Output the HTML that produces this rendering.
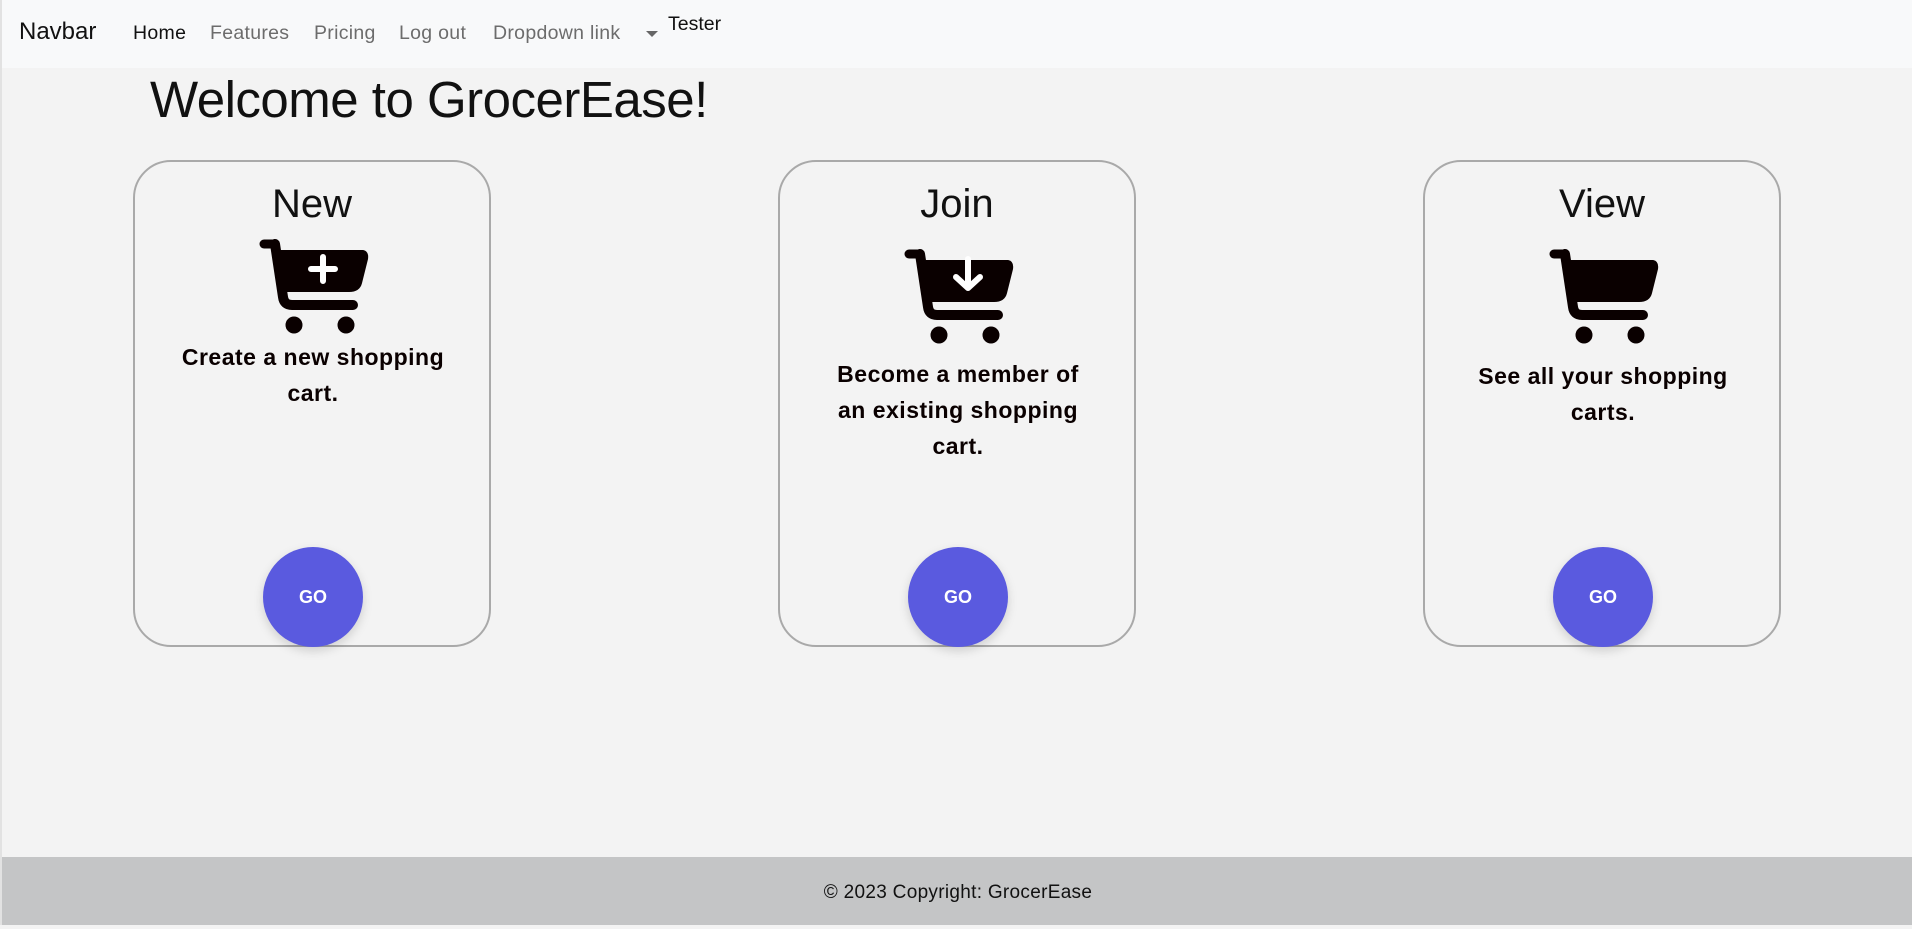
<!DOCTYPE html>
<html><head><meta charset="utf-8">
<style>
*{margin:0;padding:0;box-sizing:border-box}
body{width:1912px;height:925px;background:#f3f3f3;font-family:"Liberation Sans",sans-serif;position:relative;overflow:hidden;border-left:2px solid #e2e2e2}
.nav{position:absolute;left:0;top:0;width:1912px;height:68px;background:#f8f9fa}
.brand{position:absolute;left:17px;top:18px;font-size:24px;color:#111}
.link{position:absolute;top:22px;font-size:19.5px;color:#6c6c6c;letter-spacing:0.3px}
h1{position:absolute;left:148px;top:70px;font-size:51px;font-weight:normal;color:#111;letter-spacing:-0.5px}
.card{position:absolute;top:160px;width:358px;height:487px;border:2px solid #a9a9a9;border-radius:38px}
.card h2{position:absolute;left:0;width:100%;top:20px;text-align:center;font-size:40px;font-weight:normal;color:#111}
.card svg{position:absolute;left:124px}
.card p{position:absolute;left:40px;width:276px;text-align:center;font-weight:bold;font-size:23px;line-height:36px;color:#0a0000;letter-spacing:0.5px}
.go{position:absolute;left:128px;top:385px;width:100px;height:100px;border-radius:50%;background:#5a5adf;color:#fff;font-weight:bold;font-size:18px;text-align:center;line-height:100px;box-shadow:0 4px 10px rgba(0,0,0,.15)}
.foot{position:absolute;left:0;top:857px;width:1912px;height:68px;background:#c4c5c6;text-align:center;line-height:72px;font-size:19px;color:#111;letter-spacing:0.3px}
</style></head><body>
<div class="nav">
<span class="brand">Navbar</span>
<span class="link" style="left:131px;color:#111">Home</span>
<span class="link" style="left:208px">Features</span>
<span class="link" style="left:312px">Pricing</span>
<span class="link" style="left:397px">Log out</span>
<span class="link" style="left:491px">Dropdown link</span>
<span style="position:absolute;left:644px;top:31px;border-left:6px solid transparent;border-right:6px solid transparent;border-top:6px solid #666"></span>
<span style="position:absolute;left:666px;top:13px;font-size:19.5px;color:#111">Tester</span>
</div>
<h1>Welcome to GrocerEase!</h1>

<div class="card" style="left:131px">
<h2>New</h2>
<svg style="top:77px" width="110" height="96" viewBox="0 0 110 96">
<g fill="#0a0000" stroke="#0a0000" stroke-linecap="round" stroke-linejoin="round">
<line x1="5" y1="5" x2="16" y2="5" stroke-width="9"/>
<path d="M16 5 L24 58 Q25 66 33 66 L94 66" fill="none" stroke-width="10"/>
<path d="M18 12 L104 12 Q109 13 108 20 L102 44 Q100 52 90 52 L26 52 Z" stroke-width="2"/>
<circle cx="35" cy="86" r="8"/><circle cx="87" cy="86" r="8"/>
</g>
<path d="M64 18 V42 M52 30 H76" stroke="#fff" stroke-width="6" stroke-linecap="round"/>
</svg>
<p style="top:177px">Create a new shopping cart.</p>
<div class="go">GO</div>
</div>

<div class="card" style="left:776px">
<h2>Join</h2>
<svg style="top:87px" width="110" height="96" viewBox="0 0 110 96">
<g fill="#0a0000" stroke="#0a0000" stroke-linecap="round" stroke-linejoin="round">
<line x1="5" y1="5" x2="16" y2="5" stroke-width="9"/>
<path d="M16 5 L24 58 Q25 66 33 66 L94 66" fill="none" stroke-width="10"/>
<path d="M18 12 L104 12 Q109 13 108 20 L102 44 Q100 52 90 52 L26 52 Z" stroke-width="2"/>
<circle cx="35" cy="86" r="8"/><circle cx="87" cy="86" r="8"/>
</g>
<path d="M64 10 V38 M52 28 L64 39 L76 28" fill="none" stroke="#fff" stroke-width="6" stroke-linecap="round" stroke-linejoin="round"/>
</svg>
<p style="top:194px">Become a member of<br>an existing shopping<br>cart.</p>
<div class="go">GO</div>
</div>

<div class="card" style="left:1421px">
<h2>View</h2>
<svg style="top:87px" width="110" height="96" viewBox="0 0 110 96">
<g fill="#0a0000" stroke="#0a0000" stroke-linecap="round" stroke-linejoin="round">
<line x1="5" y1="5" x2="16" y2="5" stroke-width="9"/>
<path d="M16 5 L24 58 Q25 66 33 66 L94 66" fill="none" stroke-width="10"/>
<path d="M18 12 L104 12 Q109 13 108 20 L102 44 Q100 52 90 52 L26 52 Z" stroke-width="2"/>
<circle cx="35" cy="86" r="8"/><circle cx="87" cy="86" r="8"/>
</g>
</svg>
<p style="top:196px">See all your shopping<br>carts.</p>
<div class="go">GO</div>
</div>

<div class="foot">© 2023 Copyright: GrocerEase</div>
</body></html>
